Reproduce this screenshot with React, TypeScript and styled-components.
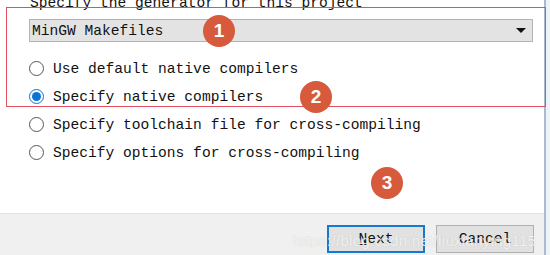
import styled, { createGlobalStyle } from "styled-components";

const GlobalStyle = createGlobalStyle`
  html, body {
    margin: 0;
    padding: 0;
    background: #fff;
    overflow: hidden;
  }
`

const mono = `"Liberation Mono", "DejaVu Sans Mono", monospace`

const options = [
    {label: "Use default native compilers", checked: false},
    {label: "Specify native compilers", checked: true},
    {label: "Specify toolchain file for cross-compiling", checked: false},
    {label: "Specify options for cross-compiling", checked: false},
]

export default function App() {
    return (
        <>
            <GlobalStyle/>
            <Screen>
                <Dialog>
                    <Body>
                        <Heading>Specify the generator for this project</Heading>
                        <Combo>
                            <span>MinGW Makefiles</span>
                            <Caret/>
                        </Combo>
                        <RadioList>
                            {options.map(o => (
                                <RadioRow key={o.label}>
                                    <Radio checked={o.checked}/>
                                    <span>{o.label}</span>
                                </RadioRow>
                            ))}
                        </RadioList>
                    </Body>
                    <Footer>
                        <Button $primary><u>N</u>ext</Button>
                        <Button>Cancel</Button>
                        <Watermark>https://blog.csdn.net/liuxianying115</Watermark>
                    </Footer>
                </Dialog>
                <Edge/>
                <Highlight/>
                <Badge $x={219} $y={31}>1</Badge>
                <Badge $x={316} $y={97}>2</Badge>
                <Badge $x={387} $y={183}>3</Badge>
            </Screen>
        </>
    )
}

const Screen = styled.div`
  position: relative;
  width: 550px;
  height: 255px;
  display: flex;
  overflow: hidden;
`

const Dialog = styled.div`
  width: 544px;
  display: flex;
  flex-direction: column;
  border-right: 2px solid #a9bccf;
`

const Edge = styled.div`
  flex: 1;
  background: #eef3f8;
`

const Body = styled.div`
  height: 213px;
  background: #fff;
  padding-left: 29px;
  box-sizing: border-box;
  font-family: ${mono};
  font-size: 14.6px;
  color: #111;
`

const Heading = styled.div`
  margin-top: -5px;
  padding-left: 1px;
  height: 17px;
  line-height: 17px;
  white-space: nowrap;
`

const Combo = styled.div`
  margin-top: 7px;
  width: 504px;
  height: 23px;
  box-sizing: border-box;
  border: 1px solid #b3b3b3;
  background: #e3e3e3;
  display: flex;
  align-items: center;
  justify-content: space-between;
  padding: 0 6px 0 2px;
`

const Caret = styled.div`
  width: 0;
  height: 0;
  border-left: 5px solid transparent;
  border-right: 5px solid transparent;
  border-top: 5px solid #111;
`

const RadioList = styled.div`
  margin-top: 18px;
  display: flex;
  flex-direction: column;
  gap: 11px;
`

const RadioRow = styled.div`
  display: flex;
  align-items: center;
  gap: 9px;
  height: 17px;
  white-space: nowrap;
`

const Radio = styled.div<{ checked: boolean }>`
  width: 15px;
  height: 15px;
  box-sizing: border-box;
  border-radius: 50%;
  border: 1px solid ${p => p.checked ? "#0a74d6" : "#555"};
  display: flex;
  align-items: center;
  justify-content: center;

  &::after {
    content: '';
    width: 9px;
    height: 9px;
    border-radius: 50%;
    background: ${p => p.checked ? "#0a74d6" : "transparent"};
  }
`

const Footer = styled.div`
  position: relative;
  flex: 1;
  background: #f0f0f0;
  border-top: 1px solid #e2e2e2;
  display: flex;
  justify-content: flex-end;
  align-items: flex-start;
  gap: 11px;
  padding: 11px 10px 0 0;
`

const Button = styled.div<{ $primary?: boolean }>`
  width: 98px;
  height: 28px;
  box-sizing: border-box;
  background: #e1e1e1;
  border: ${p => p.$primary ? "2px solid #1a78cc" : "1px solid #b0b0b0"};
  display: flex;
  align-items: center;
  justify-content: center;
  font-family: ${mono};
  font-size: 14.6px;
  color: #111;

  u {
    text-decoration-thickness: 1px;
  }
`

const Watermark = styled.div`
  position: absolute;
  left: 293px;
  top: 18px;
  font-family: "Liberation Sans", Arial, sans-serif;
  font-size: 15px;
  letter-spacing: 0.3px;
  color: rgba(255, 255, 255, 0.75);
  text-shadow: 0 0 1px rgba(160, 160, 160, 0.5);
  white-space: nowrap;
  pointer-events: none;
`

const Highlight = styled.div`
  position: absolute;
  left: 6px;
  top: 7px;
  width: 540px;
  height: 100px;
  box-sizing: border-box;
  border: 1.5px solid #e2505f;
  pointer-events: none;
`

const Badge = styled.div<{ $x: number, $y: number }>`
  position: absolute;
  left: ${p => p.$x - 16}px;
  top: ${p => p.$y - 16}px;
  width: 32px;
  height: 32px;
  border-radius: 50%;
  background: #d65a3b;
  color: #fff;
  font-family: "Liberation Sans", Arial, sans-serif;
  font-weight: bold;
  font-size: 19px;
  display: flex;
  align-items: center;
  justify-content: center;
`
